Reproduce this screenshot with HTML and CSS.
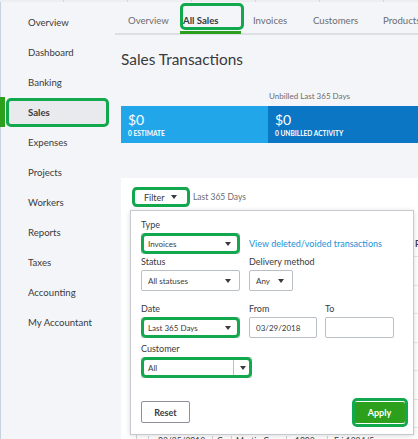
FILE: index.html
```html
<!DOCTYPE html>
<html lang="en">
<head>
<meta charset="utf-8">
<title>Sales Transactions</title>
<link rel="stylesheet" href="styles.css">
</head>
<body>
<div class="ruler"><span></span><span></span><span></span><span></span><span></span><span></span><span></span></div>
<div class="app">
  <nav class="sidebar">
    <a class="nav-item">Overview</a>
    <a class="nav-item">Dashboard</a>
    <a class="nav-item">Banking</a>
    <a class="nav-item active"><span class="nav-label">Sales</span><span class="mark mark-nav"></span></a>
    <a class="nav-item">Expenses</a>
    <a class="nav-item">Projects</a>
    <a class="nav-item">Workers</a>
    <a class="nav-item">Reports</a>
    <a class="nav-item">Taxes</a>
    <a class="nav-item">Accounting</a>
    <a class="nav-item">My Accountant</a>
  </nav>

  <main class="main">
    <div class="tabs">
      <span class="tab tab-w55">Overview</span>
      <span class="tab tab-w70 active">All Sales<span class="mark mark-tab"></span></span>
      <span class="tab tab-w60">Invoices</span>
      <span class="tab tab-w70">Customers</span>
      <span class="tab">Products</span>
    </div>

    <h1 class="title">Sales Transactions</h1>

    <div class="summary">
      <div class="summary-caption">Unbilled Last 365 Days</div>
      <div class="tile tile-estimate">
        <div class="tile-amount">$0</div>
        <div class="tile-label">0 ESTIMATE</div>
      </div>
      <div class="tile tile-unbilled">
        <div class="tile-amount">$0</div>
        <div class="tile-label">0 UNBILLED ACTIVITY</div>
      </div>
    </div>

    <section class="card">
      <div class="filter-bar">
        <button class="filter-btn">Filter <i class="caret"></i><span class="mark mark-filter"></span></button>
        <span class="filter-range">Last 365 Days</span>
      </div>

      <div class="table-area">
        <div class="txn-table">
          <div class="txn-row txn-head">
            <span class="c c-chk"></span>
            <span class="c c-date">Date</span>
            <span class="c c-type">Type</span>
            <span class="c c-cust">Customer</span>
            <span class="c c-no">No.</span>
            <span class="c c-memo">Memo</span>
            <span class="c c-pay">P</span>
          </div>
          <div class="txn-row"><span class="c c-chk"></span><span class="c c-date"></span><span class="c c-type"></span><span class="c c-cust"></span><span class="c c-no"></span><span class="c c-memo"></span><span class="c c-pay"></span></div>
          <div class="txn-row"><span class="c c-chk"></span><span class="c c-date"></span><span class="c c-type"></span><span class="c c-cust"></span><span class="c c-no"></span><span class="c c-memo"></span><span class="c c-pay"></span></div>
          <div class="txn-row"><span class="c c-chk"></span><span class="c c-date"></span><span class="c c-type"></span><span class="c c-cust"></span><span class="c c-no"></span><span class="c c-memo"></span><span class="c c-pay"></span></div>
          <div class="txn-row"><span class="c c-chk"></span><span class="c c-date"></span><span class="c c-type"></span><span class="c c-cust"></span><span class="c c-no"></span><span class="c c-memo"></span><span class="c c-pay"></span></div>
          <div class="txn-row"><span class="c c-chk"></span><span class="c c-date"></span><span class="c c-type"></span><span class="c c-cust"></span><span class="c c-no"></span><span class="c c-memo"></span><span class="c c-pay"></span></div>
          <div class="txn-row"><span class="c c-chk"></span><span class="c c-date"></span><span class="c c-type"></span><span class="c c-cust"></span><span class="c c-no"></span><span class="c c-memo"></span><span class="c c-pay"></span></div>
          <div class="txn-row txn-body">
            <span class="c c-chk"></span>
            <span class="c c-date">03/25/2018</span>
            <span class="c c-type">Credit Memo</span>
            <span class="c c-cust">Martin Co.</span>
            <span class="c c-no">1003</span>
            <span class="c c-memo">Fri 1234/5</span>
            <span class="c c-pay"></span>
          </div>
        </div>

        <div class="filter-panel">
          <div class="row row-1">
            <div class="field w-99">
              <label class="field-label">Type</label>
              <div class="control select">Invoices <i class="caret"></i><span class="mark mark-ctrl"></span></div>
            </div>
            <a class="link">View deleted/voided transactions</a>
          </div>

          <div class="row row-2">
            <div class="field w-99">
              <label class="field-label">Status</label>
              <div class="control select">All statuses <i class="caret"></i></div>
            </div>
            <div class="field">
              <label class="field-label">Delivery method</label>
              <div class="control select w-44">Any <i class="caret"></i></div>
            </div>
          </div>

          <div class="row row-3">
            <div class="field w-99">
              <label class="field-label">Date</label>
              <div class="control select">Last 365 Days <i class="caret"></i><span class="mark mark-ctrl"></span></div>
            </div>
            <div class="field w-68">
              <label class="field-label">From</label>
              <div class="control input">03/29/2018</div>
            </div>
            <div class="field w-69">
              <label class="field-label">To</label>
              <div class="control input"></div>
            </div>
          </div>

          <div class="row row-4">
            <div class="field w-111">
              <label class="field-label">Customer</label>
              <div class="control combo"><span class="combo-text">All</span><span class="combo-btn"><i class="caret"></i></span><span class="mark mark-ctrl"></span></div>
            </div>
          </div>

          <div class="row row-5">
            <button class="btn btn-reset">Reset</button>
            <button class="btn btn-apply">Apply<span class="mark mark-apply"></span></button>
          </div>
        </div>
      </div>
    </section>
  </main>
</div>
</body>
</html>
```

FILE: styles.css
```css
* { box-sizing: border-box; }

html, body {
  margin: 0;
  padding: 0;
}

body {
  width: 418px;
  height: 439px;
  overflow: hidden;
  background: #f4f5f8;
  font-family: Lato, "Open Sans", "Liberation Sans", sans-serif;
  color: #393a3d;
}

/* thin strip at the very top with column ticks */
.ruler {
  display: flex;
  height: 2px;
  background: #eceef1;
}
.ruler span {
  width: 64px;
  flex: none;
  border-right: 1px solid #d3d6db;
}

.app {
  display: flex;
  height: 437px;
  border-left: 1px solid #c7d2de;
}

/* ---------- left navigation ---------- */
.sidebar {
  width: 114px;
  flex: none;
  padding-top: 5px;
}
.nav-item {
  position: relative;
  display: flex;
  align-items: center;
  height: 30px;
  padding-left: 27px;
  font-size: 9.6px;
  color: #393a3d;
}
.nav-item.active {
  font-weight: 700;
}
.nav-item.active::before {
  content: "";
  position: absolute;
  left: -1px;
  top: 0;
  bottom: 0;
  width: 5px;
  background: #2ca01c;
}
.nav-label {
  position: relative;
  z-index: 1;
}

/* green callout outline */
.mark {
  position: absolute;
  border: 3px solid #12a84e;
  border-radius: 5px;
  pointer-events: none;
}
.mark-nav {
  left: 5px;
  right: 6px;
  top: 1px;
  bottom: 0;
  background: #e9eaed;
}

/* ---------- main column ---------- */
.main {
  flex: 1;
  min-width: 0;
}

.tabs {
  display: flex;
  align-items: center;
  height: 33px;
  padding-top: 5px;
  padding-left: 13px;
  border-bottom: 2px solid #dcdfe3;
  white-space: nowrap;
}
.tab {
  position: relative;
  flex: none;
  font-size: 9.6px;
  color: #6b6c72;
}
.tab-w55 { width: 55px; }
.tab-w60 { width: 60px; }
.tab-w70 { width: 70px; }
.tab.active {
  color: #393a3d;
  font-weight: 700;
}
.tab.active::after {
  content: "";
  position: absolute;
  left: -3px;
  width: 61px;
  bottom: -8px;
  height: 3px;
  background: #2ca01c;
}
.mark-tab {
  left: -3px;
  width: 64px;
  top: -12px;
  height: 27px;
}

.title {
  margin: 14px 0 0 6px;
  font-size: 15.4px;
  line-height: 20px;
  font-weight: 400;
  color: #393a3d;
}

.summary {
  display: grid;
  grid-template-columns: 147px 1fr;
  margin: 22px 0 0 6px;
}
.summary-caption {
  grid-column: 2;
  padding-left: 1px;
  font-size: 8px;
  line-height: 10px;
  color: #6b6c72;
  margin-bottom: 5px;
}
.tile {
  height: 37px;
  padding: 6px 0 0 7px;
  color: #fff;
}
.tile-estimate { background: #22a6ea; }
.tile-unbilled { background: #0b76c3; }
.tile-amount {
  font-size: 14px;
  line-height: 16px;
}
.tile-label {
  font-size: 6.6px;
  line-height: 10px;
  font-weight: 700;
}

/* ---------- transactions card ---------- */
.card {
  margin: 35px 0 0 6px;
  height: 300px;
  background: #fff;
}

.filter-bar {
  display: flex;
  align-items: center;
  height: 30px;
  padding: 8px 0 0 12px;
}
.filter-btn {
  position: relative;
  display: flex;
  align-items: center;
  width: 56px;
  height: 20px;
  padding: 0 0 0 10px;
  border: 1px solid #babec5;
  border-radius: 2px;
  background: #fff;
  font: inherit;
  font-size: 9px;
  color: #393a3d;
}
.filter-btn .caret {
  margin-left: 6px;
}
.mark-filter {
  left: -2px;
  right: -2px;
  top: -1px;
  bottom: -1px;
}
.filter-range {
  margin-left: 4px;
  font-size: 8.5px;
  color: #6b6c72;
}

.caret {
  display: inline-block;
  width: 0;
  height: 0;
  border-left: 3.5px solid transparent;
  border-right: 3.5px solid transparent;
  border-top: 4px solid #393a3d;
}

.table-area {
  position: relative;
  padding: 23px 0 0 15px;
}

/* transaction grid (mostly under the open filter panel) */
.txn-table {
  border-left: 1px solid #d4d7dc;
  font-size: 8.5px;
  color: #393a3d;
}
.txn-row {
  display: flex;
  height: 28.5px;
  border-bottom: 1px solid #e3e5e8;
  white-space: nowrap;
}
.txn-head {
  height: 26px;
  align-items: center;
  font-weight: 700;
}
.txn-body {
  align-items: flex-start;
  padding-top: 8px;
}
.c {
  flex: none;
  overflow: hidden;
  padding-left: 6px;
}
.txn-body .c { border-left: 1px solid #cfd2d7; }
.c-chk { width: 11px; }
.c-date { width: 64px; padding-left: 9px; }
.c-type { width: 19px; padding-left: 4px; }
.c-cust { width: 55px; padding-left: 4px; }
.c-no { width: 41px; padding-left: 8px; }
.c-memo { width: 87px; }
.c-pay { width: 40px; padding-left: 1px; }

.filter-panel {
  position: absolute;
  left: 9px;
  top: 2px;
  width: 284px;
  height: 225px;
  padding: 8px 8px 0 10px;
  background: #fff;
  border: 1px solid #c6c9ce;
  box-shadow: 0 1px 5px rgba(0, 0, 0, 0.15);
  display: flex;
  flex-direction: column;
}

.row {
  display: flex;
  align-items: flex-end;
  gap: 9px;
}
.row-2 { margin-top: 2px; }
.row-3 { margin-top: 12px; gap: 8px; }
.row-3 .w-68 { margin-left: 1px; }
.row-4 { margin-top: 5px; }
.row-5 {
  margin-top: 23px;
  align-items: center;
  justify-content: space-between;
}

.field {
  display: flex;
  flex-direction: column;
}
.w-99 { width: 99px; }
.w-68 { width: 68px; }
.w-69 { width: 69px; }
.w-111 { width: 111px; }
.w-44 { width: 44px; }

.field-label {
  font-size: 9px;
  line-height: 12px;
  margin-bottom: 2px;
  color: #393a3d;
}

.control {
  position: relative;
  display: flex;
  align-items: center;
  height: 21px;
  border: 1px solid #babec5;
  border-radius: 2px;
  font-size: 8px;
  color: #393a3d;
  background: #fff;
}
.select {
  justify-content: space-between;
  padding: 0 8px 0 6px;
}
.input {
  padding-left: 6px;
}
.combo-text {
  flex: 1;
  padding-left: 6px;
}
.combo-btn {
  display: flex;
  align-items: center;
  justify-content: center;
  width: 18px;
  height: 100%;
  border-left: 1px solid #babec5;
}
.mark-ctrl {
  left: -1px;
  right: -1px;
  top: -1px;
  bottom: -1px;
}

.link {
  height: 21px;
  line-height: 21px;
  font-size: 9px;
  color: #2290d8;
}

.btn {
  position: relative;
  height: 22px;
  border-radius: 2px;
  font: inherit;
  font-size: 9px;
  font-weight: 700;
  padding: 0;
}
.btn-reset {
  width: 49px;
  border: 1px solid #8d9096;
  background: #fff;
  color: #393a3d;
}
.btn-apply {
  width: 51px;
  height: 21px;
  border: none;
  background: #2ca01c;
  color: #fff;
}
.mark-apply {
  left: -2px;
  right: -3px;
  top: -4px;
  bottom: -4px;
}
```
